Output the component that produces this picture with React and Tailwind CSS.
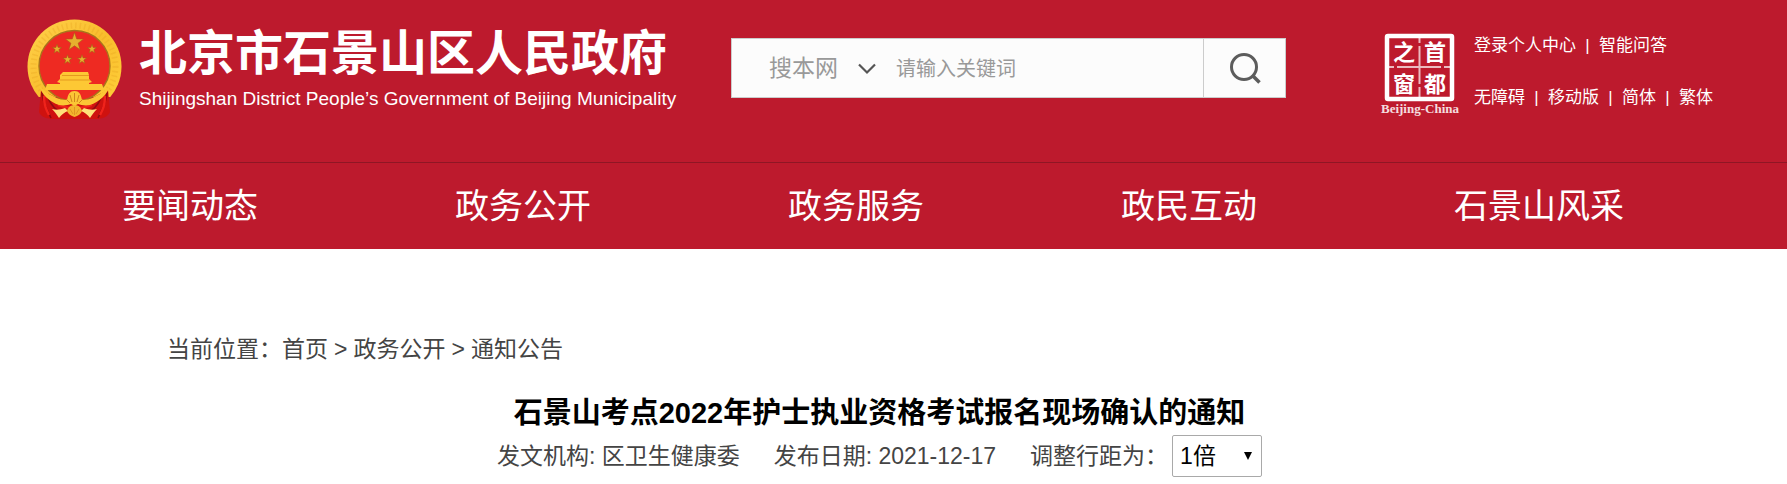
import React, { useState } from "react";

const navItems = ["要闻动态", "政务公开", "政务服务", "政民互动", "石景山风采"];

const userLinks = ["登录个人中心", "智能问答"];
const toolLinks = ["无障碍", "移动版", "简体", "繁体"];

const star = (cx, cy, r) =>
  Array.from({ length: 10 }, (_, i) => {
    const radius = i % 2 === 0 ? r : r * 0.4;
    const angle = (Math.PI / 5) * i - Math.PI / 2;
    return `${(cx + radius * Math.cos(angle)).toFixed(2)},${(
      cy +
      radius * Math.sin(angle)
    ).toFixed(2)}`;
  }).join(" ");

const Emblem = () => (
  <svg viewBox="0 0 96 102" className="h-[102px] w-24 shrink-0" aria-hidden="true">
    <defs>
      <linearGradient id="gold" x1="0" y1="0" x2="1" y2="1">
        <stop offset="0" stopColor="#ffd24c" />
        <stop offset="0.5" stopColor="#f9bd2c" />
        <stop offset="1" stopColor="#ffd23c" />
      </linearGradient>
      <clipPath id="ring">
        <rect width="96" height="79" />
      </clipPath>
    </defs>
    <circle cx="47.5" cy="48.5" r="47" fill="url(#gold)" clipPath="url(#ring)" />
    <circle
      cx="47.5"
      cy="48.5"
      r="41"
      fill="none"
      stroke="#e3a01f"
      strokeWidth="6"
      strokeDasharray="1.5 3"
      opacity="0.3"
      clipPath="url(#ring)"
    />
    {/* drapery */}
    <path
      d="M14 72L12 94c2 5 7 6 12 7h47c5-1 10-2 12-7l-2-22-16 8H30z"
      fill="#cf120f"
    />
    <path
      d="M15 74c0 9 4 15 9 26M20 77c3 9 6 12 10 15M80 74c0 9-4 15-9 26M75 77c-3 9-6 12-10 15"
      fill="none"
      stroke="#8f0c12"
      strokeWidth="1.6"
    />
    <path
      d="M17 78c0 9 2 13 5 19M78 78c0 9-2 13-5 19M31 87c10 4 24 4 34 0"
      fill="none"
      stroke="#f0231b"
      strokeWidth="2.4"
    />
    <circle cx="47.5" cy="48" r="35.5" fill="#ee2a22" stroke="#a8741c" strokeWidth="1.4" />
    <g fill="#e6b02e" stroke="#a85a18" strokeWidth="0.6">
      <polygon points={star(47.5, 24, 9.5)} />
      <polygon points={star(30, 31, 4.8)} />
      <polygon points={star(65, 31, 4.8)} />
      <polygon points={star(40.5, 41.5, 4.8)} />
      <polygon points={star(55, 41.5, 4.8)} />
    </g>
    <path
      d="M36 54h25l1 3v4l3 3-3 1v1h13l2 6H18l2-6h13v-1l-3-1 3-3v-4z"
      fill="#fdc834"
    />
    <path d="M35 57.5h27M33 62h30" stroke="#e59a1e" strokeWidth="1" />
    <path
      d="M12 68c5 4 9 8 14 10 5 3 10 4 14 4 1-6 3-9 7.500-9s6.500 3 7.500 9c4 0 9-1 14-4 5-2 9-6 14-10-3 9-11 16-20 19-5 1-9 0-12-1l-3.500 2-3.500-2c-3 1-7 2-12 1-9-3-17-10-20-19z"
      fill="#fbc635"
    />
    <path
      d="M47.500 75v9M43 77l2 7M52 77l-2 7M39 81l4 4M56 81l-4 4"
      stroke="#d0851d"
      strokeWidth="1"
    />
    <path
      d="M25 91c4 1 8 1 13-1l3 3c-3 1-7 4-9 7-2-3-4-6-7-9zM70 91c-4 1-8 1-13-1l-3 3c3 1 7 4 9 7 2-3 4-6 7-9z"
      fill="#ffe07a"
    />
    <path d="M40 93c1-4 4-6 7.500-6s6.500 2 7.500 6c-1 3-4 5-7.500 6-3.500-1-6.500-3-7.500-6z" fill="#f3b62e" />
    <path d="M47.500 89v8M43 91l3 5M52 91l-3 5" stroke="#d98f1f" strokeWidth="0.8" />
  </svg>
);

const CapitalWindow = () => (
  <svg
    viewBox="0 0 80 84"
    className="h-[84px] w-20 shrink-0"
    fill="white"
    fontFamily="'Liberation Serif', 'Noto Sans CJK SC', serif"
    textAnchor="middle"
  >
    <rect x="7" y="4" width="65" height="63" rx="1" fill="none" stroke="white" strokeWidth="4.5" />
    <path
      d="M39.500 6v5M39.500 14v38M39.500 55v11M9 35h5M17 35h44M64 35h7"
      stroke="white"
      strokeWidth="2"
      opacity="0.7"
    />
    <g fontSize="22" fontWeight="700">
      <text x="24" y="28">之</text>
      <text x="55" y="28">首</text>
      <text x="24" y="60">窗</text>
      <text x="55" y="60">都</text>
    </g>
    <text x="40" y="81" fontSize="13" fontWeight="700" opacity="0.85">
      Beijing-China
    </text>
  </svg>
);

const LinkRow = ({ items }) => (
  <ul className="flex">
    {items.map((item, index) => (
      <li key={item} className="flex">
        {index > 0 && <span className="w-[23px] text-center">|</span>}
        <a href="#" className="hover:underline">
          {item}
        </a>
      </li>
    ))}
  </ul>
);

const SearchBox = () => {
  const [keyword, setKeyword] = useState("");

  return (
    <form
      className="flex h-[60px] w-[555px] shrink-0 border border-[#ccc] bg-[#fcfcfc]"
      onSubmit={(e) => e.preventDefault()}
    >
      <div className="relative w-40 shrink-0">
        <select
          aria-label="搜索范围"
          className="h-full w-full appearance-none pl-[37px] text-[23px] text-[#999] outline-none"
        >
          <option>搜本网</option>
        </select>
        <svg
          viewBox="0 0 18 12"
          className="pointer-events-none absolute top-6 right-4 h-3 w-[18px]"
          fill="none"
          stroke="#555"
          strokeWidth="2.2"
        >
          <path d="M1 1.500L9 9.500L17 1.500" />
        </svg>
      </div>
      <input
        type="text"
        aria-label="请输入关键词"
        placeholder="请输入关键词"
        value={keyword}
        onChange={(e) => setKeyword(e.target.value)}
        className="min-w-0 flex-1 pt-[2px] pl-1 text-xl text-[#555] outline-none placeholder:text-[#999]"
      />
      <button
        type="submit"
        aria-label="搜索"
        className="flex w-[82px] items-center justify-center border-l border-[#ccc]"
      >
        <svg viewBox="0 0 32 32" className="size-8" fill="none" stroke="#5c5c5c" strokeWidth="3">
          <circle cx="15" cy="15" r="12.500" />
          <path d="M23.500 23.500L30.500 30.500" strokeWidth="3.600" />
        </svg>
      </button>
    </form>
  );
};

const App = () => {
  const [spacing, setSpacing] = useState("1");

  return (
    <div className="font-['Liberation_Sans','Noto_Sans_CJK_SC',sans-serif]">
      <header className="bg-[#bd1a2d] text-white">
        <div className="flex h-[162px] items-start pl-[27px]">
          <a href="#" className="flex items-start pt-[18px]">
            <Emblem />
            <div className="ml-4 w-[592px] pt-[9px]">
              <h1 className="text-5xl leading-[54px] font-bold whitespace-nowrap">
                北京市石景山区人民政府
              </h1>
              <p className="mt-[6px] text-[19px] leading-6 whitespace-nowrap">
                Shijingshan District People’s Government of Beijing Municipality
              </p>
            </div>
          </a>
          <div className="pt-[38px]">
            <SearchBox />
          </div>
          <div className="ml-auto flex w-[407px] shrink-0 pt-8">
            <CapitalWindow />
            <div className="ml-[14px] flex flex-col gap-7 pt-[2px] text-[17px] leading-6 whitespace-nowrap">
              <LinkRow items={userLinks} />
              <LinkRow items={toolLinks} />
            </div>
          </div>
        </div>
        <nav className="border-t border-[#8f1624] pl-[122px]">
          <ul className="grid grid-cols-5 text-[34px] leading-[86px]">
            {navItems.map((item) => (
              <li key={item}>
                <a href="#">{item}</a>
              </li>
            ))}
          </ul>
        </nav>
      </header>

      <main className="pt-[83px] pr-[195px] pl-[167px] text-[23px] leading-[34px] text-[#444]">
        <div className="flex gap-[6px]">
          <span>
            当前位置：<a href="#">首页</a>
          </span>
          <span>&gt;</span>
          <a href="#">政务公开</a>
          <span>&gt;</span>
          <a href="#">通知公告</a>
        </div>
        <h2 className="mt-[29px] text-center text-[29px] leading-9 font-bold text-black">
          石景山考点2022年护士执业资格考试报名现场确认的通知
        </h2>
        <div className="mt-1 flex items-center justify-center">
          <span>发文机构: 区卫生健康委</span>
          <span className="ml-[34px]">发布日期: 2021-12-17</span>
          <label htmlFor="spacing" className="ml-[34px]">
            调整行距为：
          </label>
          <div className="relative ml-1">
            <select
              id="spacing"
              value={spacing}
              onChange={(e) => setSpacing(e.target.value)}
              className="block h-[42px] w-[90px] appearance-none rounded-xs border border-[#a9a9a9] bg-white pl-[7px] text-[23px] text-black"
            >
              <option value="1">1倍</option>
              <option value="1.5">1.5倍</option>
              <option value="2">2倍</option>
            </select>
            <svg
              viewBox="0 0 8 8"
              className="pointer-events-none absolute top-[17px] right-[10px] size-2"
            >
              <path d="M0 0h8L4 8z" fill="black" />
            </svg>
          </div>
        </div>
      </main>
    </div>
  );
};

export default App;
